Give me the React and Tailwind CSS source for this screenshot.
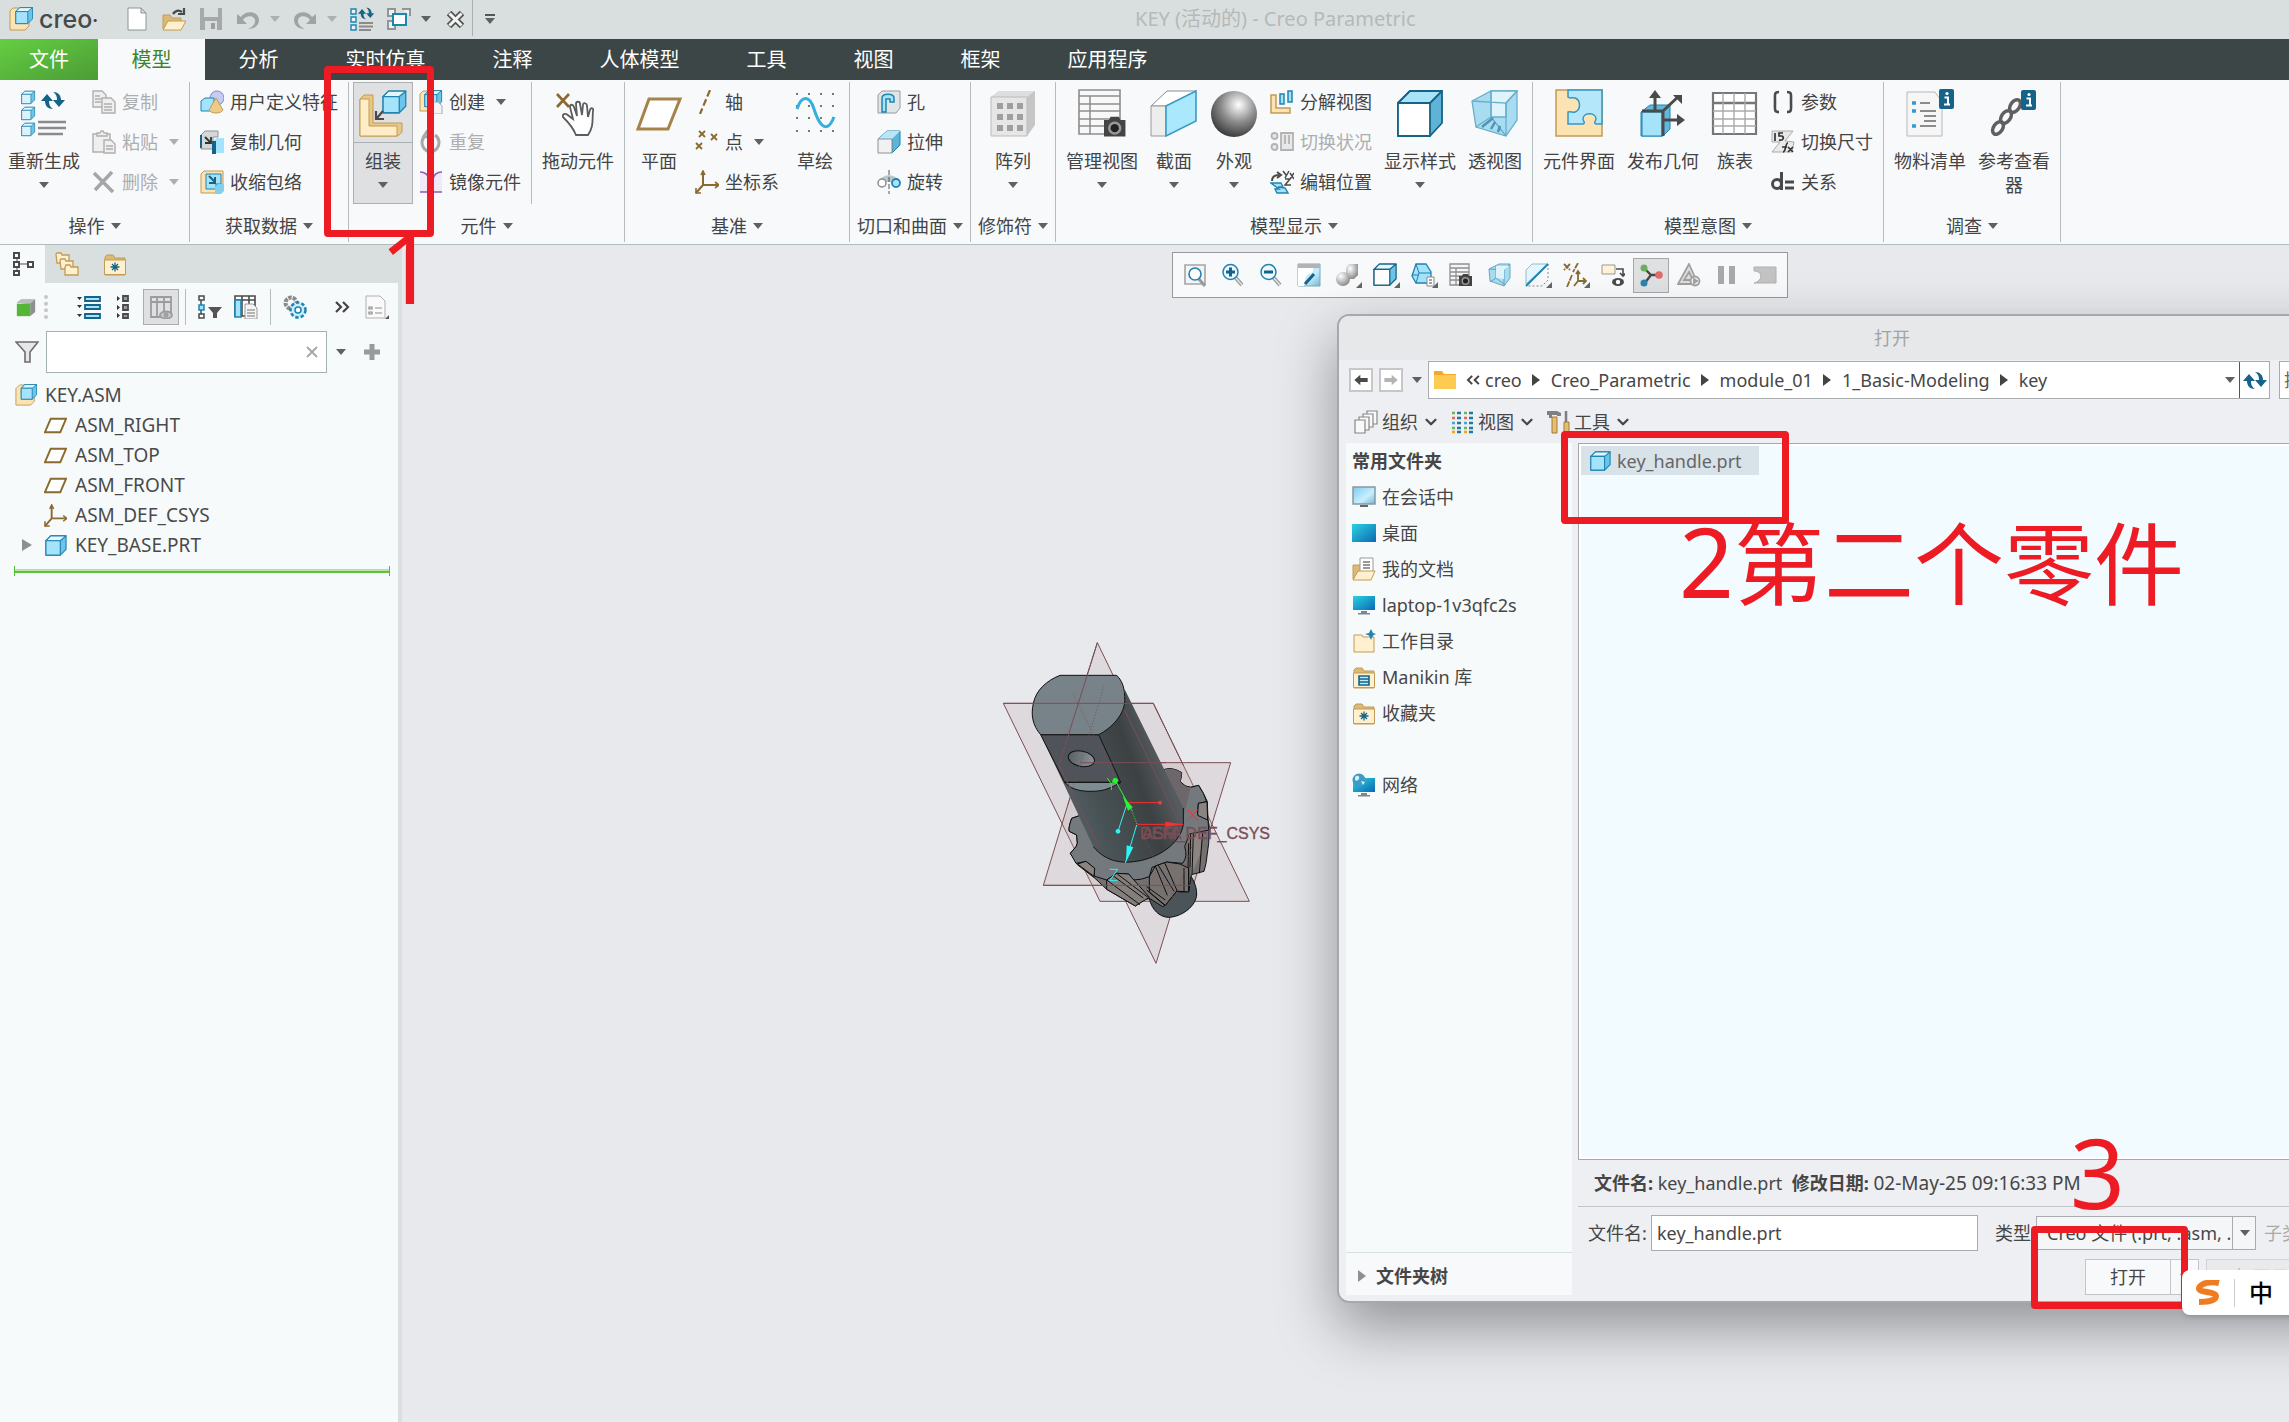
import clsx from 'clsx'
import { FiChevronDown } from 'react-icons/fi'

/* ---------- icons ---------- */

const BLUE = '#1f84b0'
const NAVY = '#156388'
const SKY = '#a5e3fb'
const PALE = '#e4f6fd'
const TAN = '#fbe3b4'
const SAND = '#c29b55'
const BROWN = '#8a6a2f'
const GRAY = '#8b8b8b'
const DARK = '#4a4a4a'

const Camera = ({ x = 0, y = 0 }) => (
  <g transform={`translate(${x} ${y})`}>
    <path d="M0 3h3l1-2h5l1 2h3v10H0z" fill="#444" />
    <circle cx="6.5" cy="8" r="4" fill="#999" />
    <circle cx="6.5" cy="8" r="2.5" fill="#222" />
  </g>
)

const Cube = ({ x = 0, y = 0, s = 1, front = SKY, line = BLUE }) => (
  <g transform={`translate(${x} ${y}) scale(${s})`} stroke={line} strokeWidth="1.2" strokeLinejoin="round">
    <path d="M1 7l5-5h16v14l-6 6H1z" fill="#6cc5e8" />
    <path d="M1 7l5-5h16l-6 5z" fill={PALE} />
    <path d="M1 7h15v15H1z" fill={front} />
  </g>
)

const Folder = ({ children }) => (
  <g>
    <path d="M2 8V5l2-2h6l2 3h10v17H2z" fill="#dcb974" stroke={SAND} />
    <path d="M1.5 8h21v14.500h-21z" fill="#fff0cf" stroke={SAND} />
    {children}
  </g>
)

const Spark = ({ x = 12, y = 15 }) => (
  <path
    d="M0-4.500V4.500M-4.500 0H4.500M-3-3L3 3M3-3L-3 3"
    transform={`translate(${x} ${y})`}
    stroke={NAVY}
    strokeWidth="1.3"
  />
)

const Swap = () => (
  <g fill={NAVY}>
    <path d="M0 13l6-7 6 7H8c0 4 1 6 4 8-5 0-8-3-8-8z" />
    <path d="M24 12l-6 7-6-7h4c0-4-1-6-4-8 5 0 8 3 8 8z" />
  </g>
)

const Magnifier = ({ sign }) => (
  <g>
    <path d="M14 14l7 8" stroke="#9a9a9a" strokeWidth="4" />
    <path d="M14 14l7 8" stroke="#e2e2e2" strokeWidth="1.500" />
    <circle cx="9.500" cy="9" r="7.500" fill="#edf9fe" stroke={BLUE} strokeWidth="1.500" />
    {sign && <path d={sign} stroke={NAVY} strokeWidth="3" />}
  </g>
)

const Info = ({ x, y }) => (
  <g transform={`translate(${x} ${y})`}>
    <rect width="15" height="20" rx="2" fill={NAVY} />
    <path d="M5.500 8.500h3.500v7M5 15.500h6" stroke="#fff" strokeWidth="2" fill="none" />
    <circle cx="8" cy="4.500" r="1.600" fill="#fff" />
  </g>
)

const Monitor = ({ y = 0 }) => (
  <g transform={`translate(0 ${y})`}>
    <path d="M1 3h22v14H1z" fill="url(#screen)" />
    <path d="M9 18h6v2h3v1.500H6V20h3z" fill="#7a8790" />
  </g>
)

const ICONS = {
  logo: (
    <g>
      <path d="M1 4l3-3h8v13h8v5l-4 4H1z" fill={TAN} stroke={SAND} />
      <Cube x={6} y={-1} s={0.8} />
    </g>
  ),
  newFile: <path d="M3 1h13l5 5v17H3zM16 1v5h5" fill="#fff" stroke="#8c9494" />,
  open: (
    <g>
      <path d="M1 22V8h7l2 3h9v11z" fill="#dcb974" stroke={SAND} />
      <path d="M1 23l5-9h18l-5 9z" fill="#fff0cf" stroke={SAND} />
      <path d="M11 7c3-4 6-4 9-2M22 1v6h-6" fill="none" stroke={DARK} strokeWidth="2.200" />
    </g>
  ),
  save: (
    <g>
      <path d="M1 1h22v22H1z" fill="#a5a9a9" />
      <path d="M5 1h14v9H5zM6 14h12v9H6z" fill="#d9dddd" />
      <path d="M12 16h4v6h-4z" fill="#9a9e9e" />
    </g>
  ),
  undo: <path d="M1 7v10h10l-4-4c3-5 12-5 12 1 0 4-3 6-7 8 7 0 11-4 11-9 0-8-12-11-18-3z" fill="#9ea4a4" />,
  redo: <path d="M23 7v10H13l4-4c-3-5-12-5-12 1 0 4 3 6 7 8-7 0-11-4-11-9 0-8 12-11 18-3z" fill="#9ea4a4" />,
  regenSmall: (
    <g>
      <path d="M1 2h5v5H1zM1 10h5v5H1zM1 18h5v5H1z" fill={PALE} stroke={BLUE} strokeWidth="1.400" />
      <path d="M9 16h14M9 19.500h14M9 23h12" stroke={GRAY} strokeWidth="1.800" />
      <g transform="translate(8 -2) scale(.68)"><Swap /></g>
    </g>
  ),
  windows: (
    <g fill="none" strokeWidth="2">
      <path d="M8 9V2H1v7zM1 14h7v8H1zM15 2h8v7" stroke="#909696" fill="#eef1f1" />
      <path d="M6 7h13v11H6z" stroke={BLUE} fill="#fff" />
    </g>
  ),
  closeX: (
    <g>
      <path d="M5 6l13 13M18 6L5 19" stroke="#555" strokeWidth="6.500" />
      <path d="M5.500 6.500l12 12M17.500 6.500l-12 12" stroke="#f4f6f6" strokeWidth="3" />
    </g>
  ),
  copy: (
    <g fill="#efefef" stroke="#b0b0b0" strokeWidth="1.400">
      <path d="M1 1h9l4 4v12H1z" /><path d="M3 6h5M3 9h6M3 12h6" />
      <path d="M10 8h9l4 4v11H10z" /><path d="M12 14h8M12 17h8M12 20h8" />
    </g>
  ),
  paste: (
    <g fill="#efefef" stroke="#b0b0b0" strokeWidth="1.400">
      <path d="M1 4h17v18H1z" /><path d="M5 6V3h3l1-2h2l1 2h3v3z" />
      <path d="M12 10h7l4 4v9H12z" /><path d="M14 16h7M14 19h7" />
    </g>
  ),
  del: <path d="M2 3l19 19M20 2L3 20" stroke="#a6a6a6" strokeWidth="3.500" />,
  udf: (
    <g>
      <circle cx="17" cy="8" r="7" fill="#c5ccf2" stroke="#7d89cf" />
      <path d="M1 11l4-3h9v9l-4 4H1z" fill={SKY} stroke={BLUE} />
      <path d="M16 8l7 12c-2 4-12 4-14 0z" fill="#edcb86" stroke={SAND} />
    </g>
  ),
  copyGeom: (
    <g>
      <path d="M1 5l4-4h13v6h-5v12H1z" fill="#d5d8da" stroke="#8f9498" />
      <path d="M1 5v13" stroke={NAVY} strokeWidth="2" />
      <path d="M5 7l6 6M11 7v6H5" stroke="#333" strokeWidth="1.800" fill="none" />
      <path d="M13 11l4-3h7v15H13z" fill={SKY} /><path d="M12 11h4v13h-4z" fill={NAVY} />
    </g>
  ),
  shrink: (
    <g>
      <path d="M1 4l3-3h19v15h-6v7H1z" fill={TAN} stroke={SAND} />
      <path d="M6 4h15v10h-5v5H6z" fill={SKY} stroke={BLUE} />
      <path d="M9 6l6 6M15 7v6H9" stroke={NAVY} strokeWidth="2" fill="none" />
      <path d="M15 17l3-3h6v7l-3 3h-6z" fill="#82d0ee" />
    </g>
  ),
  create: (
    <g>
      <path d="M1 4l3-3h9v12h8v5l-4 3H1z" fill={TAN} stroke={SAND} />
      <Cube x={5} y={-1} s={0.8} />
      <path d="M13 12h6l4 4v8H13z" fill="#f4f4f4" stroke="#aaa" />
    </g>
  ),
  repeat: <path d="M7 5a8.500 9 0 1 0 9 0M9 0L5 6l7 2" fill="none" stroke="#a8a8a8" strokeWidth="3" />,
  mirror: (
    <g stroke="#8e5bb5" strokeWidth="1.600">
      <path d="M1 2c5 0 9 3 9 8v12H1M23 2c-5 0-9 3-9 8v12h9" fill="#f1e8f8" />
    </g>
  ),
  axis: <path d="M15 0L5 24" stroke={BROWN} strokeWidth="2.200" strokeDasharray="7 3" />,
  point: (
    <path d="M4 1l6 6M10 1L4 7M16 4l6 6M22 4l-6 6M1 13l6 6M7 13l-6 6" stroke={BROWN} strokeWidth="1.800" />
  ),
  csys: (
    <g fill="none" stroke={BROWN} strokeWidth="2">
      <path d="M8 2v13l-7 8M8 15h15" />
      <path d="M6 5l2-4 2 4M20 12l4 3-4 3M1 18v5h5" strokeWidth="1.600" />
    </g>
  ),
  hole: (
    <g>
      <path d="M1 5l4-4h18v17l-4 5H1z" fill="#e2e5e7" stroke="#999" />
      <path d="M5 22V8c0-5 12-5 12 0v4h-4V9H9v13z" fill={SKY} stroke={BLUE} strokeWidth="1.500" />
    </g>
  ),
  extrude: (
    <g>
      <path d="M1 9L10 1h13v14l-8 8V9z" fill="#5db4d8" stroke={BLUE} />
      <path d="M1 9L10 1h13l-8 8z" fill="#b8e6f8" />
      <path d="M1 9h14v14H1z" fill="#f0f1f2" stroke="#909090" />
    </g>
  ),
  revolve: (
    <g fill="none">
      <path d="M4 9c3-5 13-5 16 0l-1 3H5z" fill="#b9c5cb" />
      <circle cx="5" cy="13" r="4" fill="#fff" stroke={GRAY} strokeWidth="1.500" />
      <circle cx="19" cy="13" r="4" fill={SKY} stroke={BLUE} strokeWidth="1.800" />
      <path d="M12 0v24" stroke="#555" strokeDasharray="5 2" />
    </g>
  ),
  explode: (
    <g>
      <path d="M1 5h5v13h14v5H1z" fill={TAN} stroke={SAND} strokeWidth="1.500" />
      <path d="M10 4h4v10h-4zM18 1h4v11h-4z" fill={SKY} stroke={BLUE} strokeWidth="1.500" />
    </g>
  ),
  toggleState: (
    <g fill="#e8e8e8" stroke="#b3b3b3" strokeWidth="1.800">
      <circle cx="4.500" cy="6" r="3" /><circle cx="4.500" cy="17" r="3" />
      <path d="M11 3h12v17H11zM15 5v9M19 5v9" />
    </g>
  ),
  editPos: (
    <g fill="none">
      <path d="M2 11c0-5 3-6 7-6M7 2l4 3-4 3" stroke={DARK} strokeWidth="2" />
      <path d="M13 1l3 4M19 1l-4 7M15 9h5l-5 6h6M20 3l4 6M24 3l-4 6" stroke={DARK} strokeWidth="1.500" />
      <path d="M1 13h10l2 4h-5l7 1 3 5H7l-2-4h4z" fill={SKY} stroke={BLUE} strokeWidth="1.400" />
    </g>
  ),
  param: <path d="M8 2C3 2 4 4 4 12s-1 10 4 10M16 2c5 0 4 2 4 10s1 10-4 10" fill="none" stroke={DARK} strokeWidth="2.600" />,
  dims: (
    <g>
      <path d="M1 1h21L14 11l9 1-2 10H1l8-10H1z" fill="#e9e9e9" stroke="#aaa" />
      <path d="M4 3v8M12 3H8v3h3c2 1 2 5-3 4M12 22c3 0 2-9 5-9M11 17h5M17 17l5 5M22 17l-5 5" fill="none" stroke="#333" strokeWidth="1.700" />
    </g>
  ),
  relation: (
    <g fill="none" stroke={DARK} strokeWidth="3">
      <circle cx="6" cy="14" r="4.500" /><path d="M10.500 2v18M14 12h9M14 18h9" />
    </g>
  ),
  fit: (
    <g>
      <path d="M2 2h20v19H2z" fill="#f2f4f5" stroke="#a5a5a5" strokeWidth="1.600" />
      <path d="M15 15l7 8" stroke="#999" strokeWidth="3" />
      <circle cx="12" cy="11" r="6" fill="#fff" stroke={BLUE} strokeWidth="1.600" />
    </g>
  ),
  zoomIn: <Magnifier sign="M5 9h9M9.500 4.500v9" />,
  zoomOut: <Magnifier sign="M5 9h9" />,
  repaint: (
    <g>
      <path d="M1 1h22v22H1z" fill="url(#screenLight)" stroke="#7caabb" />
      <path d="M1 5h15c2 3-1 5-4 6-4 2-4 7-5 12H1z" fill="#fff" /><path d="M1 1h22v4H1z" fill="#aeb4b7" />
      <path d="M17 11L8 21" stroke={NAVY} strokeWidth="3" />
    </g>
  ),
  shading: (
    <g>
      <path d="M11 5l3-4h9v11l-4 4h-8z" fill="url(#ball)" />
      <circle cx="8" cy="16" r="7" fill="url(#ball)" />
    </g>
  ),
  display: <Cube x={0} y={-1} s={1.05} front="#fff" line={NAVY} />,
  saved: (
    <g>
      <path d="M5 1h10l5 8v11H5L1 13z" fill={SKY} stroke={BLUE} strokeWidth="1.300" />
      <path d="M5 1l3 9-3 10M8 10h12M1 12h7" stroke={BLUE} fill="none" />
      <path d="M16 14h7v9h-7z" fill="#fff" stroke={GRAY} /><path d="M18 17h3M18 20h3" stroke={DARK} />
    </g>
  ),
  viewMgr: (
    <g>
      <path d="M1 1h19v21H1zM1 5h19M1 9h19M1 13h19M1 17h19M7 5v17" fill="#f6f6f6" stroke="#909090" strokeWidth="1.300" />
      <Camera x={10} y={10} />
    </g>
  ),
  persp: (
    <g>
      <path d="M2 6l10-5h11v14l-6 8-14-5z" fill="#a9dcf0" stroke="#62a9c7" />
      <path d="M9 3v12l-6 4M9 15l9 7M23 1l-6 6v15M2 6l15 1" fill="none" stroke="#5fa2c0" />
      <path d="M9 3h13l-5 4v9l-8-1z" fill="#dff3fa" />
    </g>
  ),
  section: (
    <g>
      <path d="M1 7l6-6h16L1 21z" fill={PALE} stroke="#8abed2" />
      <path d="M23 1v16l-6 6H2" stroke={GRAY} strokeDasharray="2 2" fill="none" />
      <path d="M1 23L23 1" stroke={BLUE} strokeWidth="2" />
    </g>
  ),
  datum: (
    <g fill="none" stroke={BROWN} strokeWidth="1.800">
      <path d="M1 1l6 6M7 1L1 7M15 0l-5 9M9 12L4 24" strokeDasharray="6 1" />
      <path d="M15 9v9h8M15 18l-4 5M13 11l2-3 2 3M20 15l3 3-3 3" />
    </g>
  ),
  annot: (
    <g>
      <path d="M1 2h13v9H1z" fill="#fff3d6" stroke="#999" />
      <path d="M15 6h7v7M19 10l3 3 3-3" fill="none" stroke={DARK} strokeWidth="1.600" />
      <ellipse cx="17" cy="19" rx="6" ry="4" fill={DARK} /><circle cx="17" cy="19" r="2.200" fill="#fff" />
    </g>
  ),
  spin: (
    <g>
      <path d="M5 5l7 7 9 0M12 12l-7 9" stroke={DARK} strokeWidth="2.400" fill="none" />
      <circle cx="5" cy="5" r="3.500" fill="#6cae5e" /><circle cx="20" cy="12" r="3.800" fill="#e36a6a" />
      <circle cx="5" cy="20" r="3.500" fill="#2b83ad" />
    </g>
  ),
  simulate: (
    <g fill="#ddd" stroke="#a0a0a0" strokeWidth="1.800">
      <path d="M12 1l9 20H1zM12 9l4 8H7z" /><circle cx="18" cy="18" r="4.500" fill="#eee" /><path d="M17 16l3 2-3 2z" />
    </g>
  ),
  pause: <path d="M3 3h6v18H3zM14 3h6v18h-6z" fill="#a9a9a9" />,
  shell: <path d="M1 4h22v16H1c9-2 9-12 0-12z" fill="#c3c3c3" stroke="#b0b0b0" />,

  modelTree: (
    <g fill="#fff" stroke={DARK} strokeWidth="2">
      <path d="M5 6v12M7 12h9" stroke={GRAY} strokeWidth="1.500" />
      <path d="M2 1h5v5H2zM2 10h5v5H2zM2 19h5v4H2zM16 10h5v5h-5z" />
    </g>
  ),
  folders: (
    <g fill="#fff0cf" stroke={SAND} strokeWidth="1.300">
      <path d="M1 2l1-1h4l1 2h7v8H2z" /><path d="M5 8l1-1h4l1 2h7v8H6z" /><path d="M10 15l1-2h4l1 2h7v8H10z" />
    </g>
  ),
  favFolder: <Folder><Spark /></Folder>,
  greenBox: (
    <g>
      <path d="M1 7l5-4h17v15l-6 5V8z" fill="#8f8f8f" /><path d="M1 7l5-4h17l-6 5z" fill="#bdbdbd" />
      <path d="M1 8h16v15H1z" fill="#54b536" />
    </g>
  ),
  expand: (
    <g>
      <path d="M8 2h15v4H8zM8 10h15v4H8zM8 19h15v4H8z" fill={SKY} stroke={NAVY} strokeWidth="1.800" />
      <path d="M0 2h5L2.500 5zM0 10h5l-2.500 3zM0 19h5l-2.500 3z" fill="#333" />
    </g>
  ),
  collapse: (
    <g>
      <path d="M10 1h5v5h-5zM10 10h5v5h-5zM10 19h5v4h-5z" fill="#999" stroke={DARK} strokeWidth="1.800" />
      <path d="M4 1v5l3-2.500zM4 10v5l3-2.500zM4 18v5l3-2.500z" fill="#333" />
    </g>
  ),
  columns: (
    <g fill="none" stroke="#9c9c9c" strokeWidth="1.800">
      <path d="M2 2h20v20H2zM2 7h20M8 2v20M15 2v14" />
      <ellipse cx="17" cy="20" rx="6" ry="3.500" fill="#c6c6c6" /><circle cx="17" cy="20" r="1.500" />
    </g>
  ),
  treeFilter: (
    <g>
      <path d="M3 4v17" stroke={DARK} strokeWidth="1.500" />
      <path d="M1 1h5v4H1zM1 19h5v4H1z" fill="#fff" stroke={DARK} strokeWidth="1.500" />
      <path d="M1 10h5v5H1z" fill={SKY} stroke={BLUE} strokeWidth="1.500" />
      <path d="M10 12h14l-5 6v5h-4v-5z" fill="#555" />
    </g>
  ),
  colSettings: (
    <g>
      <path d="M1 1h20v20H1zM8 1v20M15 1v8M1 5h20" fill="#fff" stroke={DARK} strokeWidth="1.600" />
      <path d="M1 5h6v17H1z" fill={SKY} stroke={BLUE} strokeWidth="1.600" />
      <path d="M11 9h8l4 4v11H11z" fill="#f4f4f4" stroke="#999" /><path d="M13 15h8M13 18h8M13 21h8" stroke="#777" />
    </g>
  ),
  gears: (
    <g fill="none">
      <circle cx="8" cy="8" r="5.500" stroke="#8c8c8c" strokeWidth="4" strokeDasharray="3.500 1" />
      <circle cx="15" cy="15" r="7.500" stroke={BLUE} strokeWidth="2.500" strokeDasharray="3.500 2" fill="#c9edfb" />
      <circle cx="15" cy="15" r="3" stroke={BLUE} strokeWidth="1.500" fill="#fff" />
    </g>
  ),
  more: <path d="M5 7l5 5-5 5M12 7l5 5-5 5" fill="none" stroke="#444" strokeWidth="2.200" />,
  less: <path d="M11 7l-5 5 5 5M19 7l-5 5 5 5" fill="none" stroke="#444" strokeWidth="2.400" />,
  report: (
    <g>
      <path d="M1 1h14l5 5v17H1z" fill="#fafafa" stroke="#b0b0b0" />
      <path d="M4 12h3v2H4zM4 17h3v2H4zM10 13h7M10 18h7" stroke={GRAY} strokeWidth="1.200" fill="none" />
      <path d="M24 20v4h-4z" fill="#555" />
    </g>
  ),
  funnel: <path d="M1 2h22l-8 10v10h-5V12z" fill="#e7e7e7" stroke="#6d6d6d" strokeWidth="1.600" />,
  plus: <path d="M9.500 4h5v5.500H20v5h-5.500V20h-5v-5.500H4v-5h5.500z" fill="#9a9a9a" />,
  asm: (
    <g>
      <path d="M1 5l4-4h8v13h8v5l-4 4H1z" fill={TAN} stroke={SAND} />
      <Cube x={6} y={-1} s={0.8} />
    </g>
  ),
  plane: <path d="M7 5h16l-6 14H1z" fill="#fff" stroke={BROWN} strokeWidth="2" />,
  part: <Cube x={1} y={0} />,

  back: <path d="M2 12l9-8v5h11v6H11v5z" fill={DARK} />,
  forward: <path d="M22 12l-9-8v5H2v6h11v5z" fill="#b4b4b4" />,
  folder: (
    <g>
      <path d="M1 3h8l2 3h12v4H1z" fill="#f0a928" /><path d="M1 7h22v14H1z" fill="#fdcb52" />
    </g>
  ),
  refresh: <Swap />,
  organize: (
    <g fill="#f9f9f9" stroke="#888" strokeWidth="1.200">
      <path d="M13 1h10v13H13z" /><path d="M9 4h10v13H9z" /><path d="M5 7h10v13H5z" /><path d="M1 10h10v13H1z" />
    </g>
  ),
  views: (
    <g strokeWidth="2.600">
      <path d="M7 3h4M7 8h4M7 13h4M7 18h4M7 22h4M19 3h4M19 8h4M19 13h4M19 18h4M19 22h4" stroke="#1f7a9e" />
      <path d="M2 3h3M14 3h3M2 18h3M14 18h3" stroke="#6fb35e" /><path d="M2 8h3M14 8h3" stroke="#df6b62" />
      <path d="M2 13h3M14 13h3" stroke="#3da7e8" /><path d="M2 22h3M14 22h3" stroke="#efa720" />
    </g>
  ),
  tools: (
    <g>
      <path d="M1 1h10l4 2v3h-4V5H6v3H3V5H1z" fill="#7d7f86" />
      <path d="M6 7h5v16H6z" fill="#e6bd74" stroke="#a37a35" /><path d="M20 1v11" stroke="#7d7f86" strokeWidth="2.500" />
      <path d="M18 12h5v11h-5z" fill="#e6bd74" stroke="#a37a35" />
    </g>
  ),
  session: (
    <g>
      <path d="M1 2h22v17H1z" fill="url(#screenLight)" stroke="#8b979d" strokeWidth="1.500" />
      <path d="M8 20h8v2H8z" fill="#666" />
    </g>
  ),
  desktop: <path d="M0 3h24v18H0z" fill="url(#screen)" />,
  docs: (
    <g>
      <path d="M1 22V8h7l2 2v12z" fill="#dcb974" stroke={SAND} />
      <path d="M8 1h13v16H8z" fill="#fff" stroke="#999" /><path d="M11 5h7M11 8h7M11 11h7" stroke="#777" strokeWidth="1.400" />
      <path d="M1 23l5-9h17l-4 9z" fill="#fff0cf" stroke={SAND} />
    </g>
  ),
  computer: <Monitor />,
  workDir: (
    <g>
      <path d="M2 8V6h8l1 2h11v15H2z" fill="#fff0cf" stroke={SAND} />
      <path d="M19 0l2 4 3 1-3 1.500L19 11l-2-4.500L13 5l4-1z" fill={BLUE} />
    </g>
  ),
  manikin: (
    <Folder>
      <path d="M7 11h10v9H7zM7 14h10M7 17h10" fill="#bfeaff" stroke={NAVY} strokeWidth="1.600" />
    </Folder>
  ),
  network: (
    <g>
      <Monitor y={2} />
      <circle cx="7" cy="7" r="6.500" fill="#3d9cc6" /><path d="M3 4c3-3 5 0 4 2s-3 2-4 1zM9 8l4 1-2 3z" fill="#d3effa" />
    </g>
  ),
}

const BIG_ICONS = {
  regen: (
    <g>
      <Cube x={1} y={1} s={0.62} front="#d9f3fc" /><Cube x={1} y={17} s={0.62} front="#d9f3fc" />
      <Cube x={1} y={33} s={0.62} front="#d9f3fc" />
      <path d="M18 33h28M18 39h28M18 45h25" stroke={GRAY} strokeWidth="2.600" />
      <g transform="translate(21 -1)"><Swap /></g>
    </g>
  ),
  assemble: (
    <g>
      <path d="M1 10l4-4h9v28h26l3 0v9l-4 4H1z" fill="#e9c887" stroke={SAND} />
      <path d="M1 10h9v27h28v10H1z" fill="#ffedc8" stroke={SAND} />
      <Cube x={23} y={0} s={1.08} />
      <path d="M24 22l-6 7M17 22v8h8" stroke={DARK} strokeWidth="2.200" fill="none" />
    </g>
  ),
  drag: (
    <g>
      <path d="M3 5l12 13M15 5L3 18" stroke={BROWN} strokeWidth="2.600" />
      <path
        d="M22 46c-3-8-9-14-13-18-1-4 3-4 6-1l4 3-3-12c0-3 3-3 4 0l3 9-1-12c0-3 4-3 4 0l2 11 1-10c0-3 4-2 4 1l1 11 2-7c1-3 4-2 3 1-1 10 1 15-5 24z"
        fill="#fff"
        stroke="#5d5d5d"
        strokeWidth="1.800"
      />
    </g>
  ),
  plane: <path d="M14 10h31l-12 30H3z" fill="#fff" stroke="#a5834a" strokeWidth="3" />,
  sketch: (
    <g>
      {[5, 17, 29, 42].map((y) => (
        <path key={y} d={`M5 ${y}h38`} stroke="#777" strokeWidth="2" strokeDasharray="2 10" />
      ))}
      <path d="M6 20c5-15 13-13 17 0s12 28 20 8" fill="none" stroke="#35aee0" strokeWidth="3" />
    </g>
  ),
  pattern: (
    <g>
      <path d="M2 8l8-6h36v34l-8 11H2z" fill="#c6c6c6" /><path d="M2 8l8-6h36l-8 6z" fill="#dedede" />
      <path d="M2 8h36v39H2z" fill="#e6e6e6" stroke="#bbb" />
      {[14, 25, 36].map((y) => (
        <path key={y} d={`M8 ${y + 3}h6M18 ${y + 3}h6M28 ${y + 3}h6`} stroke="#9f9f9f" strokeWidth="6" />
      ))}
    </g>
  ),
  viewMgr: (
    <g>
      <path d="M1 1h41v44H1z" fill="#f8f8f8" stroke="#8d8d8d" strokeWidth="1.600" />
      <path d="M1 7h41M1 15h41M1 22h41M1 30h41M1 37h41M12 7v38" stroke="#8d8d8d" strokeWidth="1.500" />
      <g transform="translate(26 26) scale(1.650)"><Camera /></g>
    </g>
  ),
  section: (
    <g>
      <path d="M1 17L17 2h29L16 17z" fill="#fff" stroke={GRAY} />
      <path d="M1 17h15v30H1z" fill="#ededed" stroke="#999" />
      <path d="M16 17L46 2v30L16 47z" fill="#a9e8fd" stroke="#3a9cc5" strokeWidth="1.600" />
    </g>
  ),
  appearance: <circle cx="24" cy="25" r="23" fill="url(#ballDark)" />,
  display: (
    <g stroke={NAVY} strokeWidth="1.800" strokeLinejoin="round">
      <path d="M2 14L14 2h32v32L34 47H2z" fill="#5fb3d6" />
      <path d="M2 14L14 2h32L34 14z" fill="#a8e3f8" /><path d="M2 14h32v33H2z" fill="#fff" />
    </g>
  ),
  persp: (
    <g stroke="#68aecb" strokeWidth="1.300">
      <path d="M1 12L20 2h26v29L35 47 5 38z" fill="#a8dcf0" />
      <path d="M20 2h26L35 14v14H20z" fill="#dff3fa" /><path d="M1 12l34 2v33M35 14L46 2M20 2v26L5 38M20 28l15 19" fill="none" />
      <path d="M11 38l11-9M20 40l4-7M27 43l2-6" stroke="#4f94b3" strokeWidth="2.500" />
    </g>
  ),
  iface: (
    <g strokeWidth="1.500">
      <path d="M1 1h46v46H1z" fill={TAN} stroke={SAND} />
      <path
        d="M13 1h34v34h-6c-3-1 0-3 0-5 0-7-13-7-13 0 0 2 3 4 0 5H13V23c3-1 5 1 7 0 6-2 6-12 0-14-3-1-5 1-7-1z"
        fill="#b5e7fa"
        stroke="#3498c4"
      />
    </g>
  ),
  publish: (
    <g>
      <path d="M2 23l9-7h20v24l-7 7H2z" fill="#5fb9dd" stroke={BLUE} />
      <path d="M3 23h20v24H3z" fill="#a5e3fb" stroke={BLUE} />
      <path d="M3 22h21v25M24 22L40 7M16 22V5M24 31h18" stroke={DARK} strokeWidth="3" fill="none" />
      <path d="M10 9l6-8 6 8zM34 6h9v9zM38 25l8 6-8 6z" fill={DARK} />
    </g>
  ),
  family: (
    <g fill="#fff" stroke="#777">
      <path d="M2 4h43v41H2z" strokeWidth="2.200" /><path d="M2 14h43" strokeWidth="2.600" />
      <path d="M2 22h43M2 30h43M2 37h43M12 4v41M23 4v41M34 4v41" stroke="#aaa" strokeWidth="1.400" />
    </g>
  ),
  bom: (
    <g>
      <path d="M1 3h28l7 10v34H1z" fill="#f6f6f6" stroke="#b8b8b8" />
      <path d="M6 14h4M6 22h4M6 37h4" stroke="#2f9ad6" strokeWidth="3.500" />
      <path d="M14 14h10M14 22h16M18 27h12M18 32h12M14 37h16" stroke={GRAY} strokeWidth="1.800" />
      <Info x={33} y={0} />
    </g>
  ),
  refViewer: (
    <g>
      <g fill="none" stroke="#5f5f5f" strokeWidth="3.500">
        <ellipse cx="8" cy="39" rx="4.500" ry="7" transform="rotate(35 8 39)" />
        <ellipse cx="16" cy="28" rx="4.500" ry="7" transform="rotate(35 16 28)" />
        <ellipse cx="25" cy="17" rx="4.500" ry="7" transform="rotate(35 25 17)" />
      </g>
      <Info x={31} y={1} />
    </g>
  ),
}

function Icon({ name, className = 'size-6' }) {
  return (
    <svg viewBox="0 0 24 24" className={clsx('shrink-0', className)} aria-hidden="true">
      {ICONS[name]}
    </svg>
  )
}

const BigIcon = ({ name }) => (
  <svg viewBox="0 0 48 48" className="size-12 shrink-0" aria-hidden="true">{BIG_ICONS[name]}</svg>
)

const Caret = ({ light }) => (
  <svg viewBox="0 0 10 6" className="h-1.5 w-2.5 shrink-0" aria-hidden="true">
    <path d="M0 0h10L5 6z" fill={light ? '#adb0b0' : '#606060'} />
  </svg>
)

const SharedDefs = () => (
  <svg className="absolute size-0" aria-hidden="true">
    <defs>
      <linearGradient id="screen" x1="0" y1="0" x2="1" y2="1">
        <stop offset="0" stopColor="#2bd3e0" /><stop offset="1" stopColor="#0b68b4" />
      </linearGradient>
      <linearGradient id="screenLight" x1="0" y1="0" x2="1" y2="1">
        <stop offset="0" stopColor="#7cccf3" /><stop offset=".6" stopColor="#c9eefc" /><stop offset="1" stopColor="#6fb6d3" />
      </linearGradient>
      <radialGradient id="ball" cx=".35" cy=".3" r=".8">
        <stop offset="0" stopColor="#fff" /><stop offset="1" stopColor="#808080" />
      </radialGradient>
      <radialGradient id="ballDark" cx=".6" cy=".3" r=".75">
        <stop offset="0" stopColor="#fff" /><stop offset=".5" stopColor="#8d8d8d" /><stop offset="1" stopColor="#333" />
      </radialGradient>
    </defs>
  </svg>
)

/* ---------- ribbon ---------- */

const TABS = ['分析', '实时仿真', '注释', '人体模型', '工具', '视图', '框架', '应用程序']

function BigButton({ icon, label, caret, pressed }) {
  return (
    <button
      className={clsx(
        'flex min-w-15 max-w-21 flex-col items-center self-stretch border',
        pressed ? 'border-[#adb0b2] bg-[#dfe0e2]' : 'border-transparent'
      )}
    >
      <span className={clsx('flex h-15 items-center self-stretch justify-center border-b', pressed ? 'border-[#adb0b2]' : 'border-transparent')}>
        <BigIcon name={icon} />
      </span>
      <span className="px-[5px] pt-1.5 leading-6">{label}</span>
      {caret && <span className="flex h-6 items-center"><Caret /></span>}
    </button>
  )
}

function SmallButton({ icon, label, caret, disabled }) {
  return (
    <button disabled={disabled} className={clsx('flex h-10 items-center px-1.5', disabled && 'text-[#acaeb0]')}>
      <Icon name={icon} />
      <span className="ml-1.5">{label}</span>
      {caret && <span className="ml-[11px]"><Caret light={disabled} /></span>}
    </button>
  )
}

const Stack = ({ items }) => (
  <div className="flex flex-col">
    {items.map((item) => <SmallButton key={item.label} {...item} />)}
  </div>
)

function Group({ title, className = 'px-1', children }) {
  return (
    <section className="my-0.5 flex shrink-0 flex-col border-r border-[#b4bcbe]">
      <div className={clsx('flex h-[122px] justify-center', className)}>{children}</div>
      <button className="mx-auto flex h-9 items-center gap-1.5 px-[7px] pt-2">
        {title}
        <Caret />
      </button>
    </section>
  )
}

function Ribbon() {
  return (
    <div className="flex h-[165px] shrink-0 overflow-hidden border-b border-[#aebcbe] bg-[#f8f9fb]">
      <Group title="操作" className="pr-1 pl-0.5">
        <BigButton icon="regen" label="重新生成" caret />
        <Stack
          items={[
            { icon: 'copy', label: '复制', disabled: true },
            { icon: 'paste', label: '粘贴', caret: true, disabled: true },
            { icon: 'del', label: '删除', caret: true, disabled: true },
          ]}
        />
      </Group>
      <Group title="获取数据">
        <Stack
          items={[
            { icon: 'udf', label: '用户定义特征' },
            { icon: 'copyGeom', label: '复制几何' },
            { icon: 'shrink', label: '收缩包络' },
          ]}
        />
      </Group>
      <Group title="元件">
        <BigButton icon="assemble" label="组装" caret pressed />
        <Stack
          items={[
            { icon: 'create', label: '创建', caret: true },
            { icon: 'repeat', label: '重复', disabled: true },
            { icon: 'mirror', label: '镜像元件' },
          ]}
        />
        <div className="mx-1 w-px bg-[#b4bcbe]" />
        <BigButton icon="drag" label="拖动元件" />
      </Group>
      <Group title="基准">
        <BigButton icon="plane" label="平面" />
        <Stack
          items={[
            { icon: 'axis', label: '轴' },
            { icon: 'point', label: '点', caret: true },
            { icon: 'csys', label: '坐标系' },
          ]}
        />
        <BigButton icon="sketch" label="草绘" />
      </Group>
      <Group title="切口和曲面">
        <Stack
          items={[
            { icon: 'hole', label: '孔' },
            { icon: 'extrude', label: '拉伸' },
            { icon: 'revolve', label: '旋转' },
          ]}
        />
      </Group>
      <Group title="修饰符">
        <BigButton icon="pattern" label="阵列" caret />
      </Group>
      <Group title="模型显示">
        <BigButton icon="viewMgr" label="管理视图" caret />
        <BigButton icon="section" label="截面" caret />
        <BigButton icon="appearance" label="外观" caret />
        <Stack
          items={[
            { icon: 'explode', label: '分解视图' },
            { icon: 'toggleState', label: '切换状况', disabled: true },
            { icon: 'editPos', label: '编辑位置' },
          ]}
        />
        <BigButton icon="display" label="显示样式" caret />
        <BigButton icon="persp" label="透视图" />
      </Group>
      <Group title="模型意图">
        <BigButton icon="iface" label="元件界面" />
        <BigButton icon="publish" label="发布几何" />
        <BigButton icon="family" label="族表" />
        <Stack
          items={[
            { icon: 'param', label: '参数' },
            { icon: 'dims', label: '切换尺寸' },
            { icon: 'relation', label: '关系' },
          ]}
        />
      </Group>
      <Group title="调查">
        <BigButton icon="bom" label="物料清单" />
        <BigButton icon="refViewer" label="参考查看器" />
      </Group>
    </div>
  )
}

function TitleBar() {
  return (
    <header className="flex h-[39px] shrink-0 items-center bg-[#d9dfde] pb-0.5">
      <Icon name="logo" className="ml-[9px] size-6" />
      <span className="ml-1.5 w-[86px] font-['Inter',sans-serif] text-[25px] leading-8 font-medium text-[#454b4b]">
        creo<sup className="text-[10px]">•</sup>
      </span>
      <div className="flex items-center gap-[13px]">
        <button aria-label="新建"><Icon name="newFile" /></button>
        <button aria-label="打开"><Icon name="open" /></button>
        <button aria-label="保存"><Icon name="save" /></button>
        <button aria-label="撤消" className="flex items-center gap-2.5"><Icon name="undo" /><Caret light /></button>
        <button aria-label="重做" className="flex items-center gap-2.5"><Icon name="redo" /><Caret light /></button>
        <button aria-label="重新生成"><Icon name="regenSmall" /></button>
        <button aria-label="窗口" className="flex items-center gap-2.5"><Icon name="windows" /><Caret /></button>
        <button aria-label="关闭"><Icon name="closeX" /></button>
      </div>
      <div className="ml-1 h-9 w-px self-start bg-[#a9b0b0]" />
      <button aria-label="自定义" className="ml-3 flex w-2.5 flex-col items-center gap-0.5">
        <span className="h-0.5 w-2.5 bg-[#555]" />
        <Caret />
      </button>
      <h1 className="ml-[640px] whitespace-nowrap text-xl text-[#b4b9b9]">KEY (活动的) - Creo Parametric</h1>
    </header>
  )
}

function TabBar() {
  return (
    <nav className="flex h-[41px] shrink-0 bg-[#3c4646] text-xl text-white">
      <button className="w-[98px] bg-linear-to-br from-[#65cf43] to-[#4b9c35]">文件</button>
      <button className="w-[107px] bg-[#f8f9fb] text-[#3d8428]">模型</button>
      {TABS.map((tab) => (
        <button key={tab} className={tab.length > 2 ? 'w-[147px]' : 'w-[107px]'}>{tab}</button>
      ))}
    </nav>
  )
}

/* ---------- model tree ---------- */

const TREE = [
  ['plane', 'ASM_RIGHT'],
  ['plane', 'ASM_TOP'],
  ['plane', 'ASM_FRONT'],
  ['csys', 'ASM_DEF_CSYS'],
  ['part', 'KEY_BASE.PRT'],
]

function ModelTree() {
  return (
    <aside className="flex w-[402px] shrink-0 flex-col border-r-4 border-[#d9dfde] bg-[#f7fafb]">
      <div className="flex h-[38px] items-center bg-[#d9dfde]">
        <button aria-label="模型树" className="flex h-full w-[45px] items-center bg-[#f7fafb] pl-3"><Icon name="modelTree" /></button>
        <button aria-label="文件夹浏览器" className="ml-2.5"><Icon name="folders" /></button>
        <button aria-label="收藏夹" className="ml-6"><Icon name="favFolder" /></button>
      </div>

      <div className="mt-1.5 flex h-9 items-center">
        <button aria-label="显示" className="ml-4"><Icon name="greenBox" className="size-5" /></button>
        <div className="ml-2 h-6 border-l-4 border-dotted border-[#c6c6c6]" />
        <button aria-label="全部展开" className="ml-[29px]"><Icon name="expand" /></button>
        <button aria-label="全部折叠" className="ml-3"><Icon name="collapse" /></button>
        <button aria-label="列显示" className="ml-1.5 flex h-9 w-9 items-center justify-center border border-[#acacac] bg-[#dfe0e2]"><Icon name="columns" /></button>
        <div className="ml-1.5 h-9 w-px bg-[#b4bcbe]" />
        <button aria-label="树过滤器" className="ml-3"><Icon name="treeFilter" /></button>
        <button aria-label="树列" className="ml-3"><Icon name="colSettings" /></button>
        <div className="ml-3 h-9 w-px bg-[#b4bcbe]" />
        <button aria-label="设置" className="ml-3"><Icon name="gears" /></button>
        <button aria-label="更多" className="ml-6"><Icon name="more" /></button>
        <button aria-label="报告" className="ml-2.5"><Icon name="report" /></button>
      </div>

      <div className="mt-1.5 flex h-[42px] items-center">
        <Icon name="funnel" className="ml-[15px] size-6" />
        <div className="ml-[7px] flex h-full w-[281px] items-center border border-[#a3b1b1] bg-white pr-2">
          <input aria-label="搜索模型树" className="h-full min-w-0 flex-1 px-2 outline-none" />
          <button aria-label="清除">
            <svg viewBox="0 0 12 12" className="size-3"><path d="M1 1l10 10M11 1L1 11" stroke="#a5a5a5" strokeWidth="1.800" /></svg>
          </button>
        </div>
        <button aria-label="搜索选项" className="ml-[9px]"><Caret /></button>
        <button aria-label="添加" className="ml-3.5"><Icon name="plus" /></button>
      </div>

      <ul className="mt-[7px] text-[19px] leading-[30px] text-[#4a4a4a]">
        <li className="flex items-center gap-2 pl-[15px]"><Icon name="asm" className="size-[22px]" />KEY.ASM</li>
        {TREE.map(([icon, label]) => (
          <li key={label} className="flex items-center pl-[22px]">
            <span className="w-[22px]">
              {icon === 'part' && (
                <svg viewBox="0 0 10 12" className="h-3 w-2.5"><path d="M0 0l10 6-10 6z" fill="#8f8f8f" /></svg>
              )}
            </span>
            <Icon name={icon} className="mr-2 size-[23px]" />
            {label}
          </li>
        ))}
      </ul>
      <div className="mr-2 ml-3.5 mt-1.5 flex h-2.5 items-center border-x border-[#54bd37]">
        <div className="h-1 w-full border-b-2 border-[#5cc43c] bg-[#b5e2a8]" />
      </div>
    </aside>
  )
}

/* ---------- graphics area ---------- */

const VIEW_TOOLS = [
  ['fit', '重新调整'],
  ['zoomIn', '放大'],
  ['zoomOut', '缩小'],
  ['repaint', '重画'],
  ['shading', '渲染选项', true],
  ['display', '显示样式', true],
  ['saved', '已保存方向', true],
  ['viewMgr', '视图管理器'],
  ['persp', '透视图'],
  ['section', '截面', true],
  ['datum', '基准显示过滤器', true],
  ['annot', '注释显示'],
  ['spin', '旋转中心'],
  ['simulate', '仿真'],
  ['pause', '暂停'],
  ['shell', '几何'],
]

function ViewToolbar() {
  return (
    <div className="absolute top-[7px] left-[770px] flex h-[46px] items-center gap-0.5 border border-[#999] bg-[#f8f9fb] px-1">
      {VIEW_TOOLS.map(([icon, label, menu]) => (
        <button
          key={icon}
          aria-label={label}
          className={clsx(
            'relative flex h-[35px] w-9 items-center justify-center border',
            icon === 'spin' ? 'border-[#a5a8aa] bg-[#dfe0e2]' : 'border-transparent'
          )}
        >
          <Icon name={icon} />
          {menu && (
            <svg viewBox="0 0 6 6" className="absolute right-0.5 bottom-1 size-1.5"><path d="M6 0v6H0z" fill="#666" /></svg>
          )}
        </button>
      ))}
    </div>
  )
}

function KeyModel() {
  return (
    <svg viewBox="0 0 960 1050" className="absolute top-[385px] left-[578px] h-[350px] w-80" aria-label="KEY 装配模型">
      <defs>
        <linearGradient id="shaft" x1=".1" y1=".6" x2=".8" y2=".3">
          <stop offset="0" stopColor="#566268" /><stop offset=".35" stopColor="#475154" />
          <stop offset=".75" stopColor="#3c4143" /><stop offset="1" stopColor="#555b5e" />
        </linearGradient>
        <linearGradient id="hole" x1="0" x2="1">
          <stop offset="0" stopColor="#5a5f63" /><stop offset="1" stopColor="#8b9499" />
        </linearGradient>
      </defs>

      {/* datum planes */}
      <g fill="#b49a9c" fillOpacity=".2" stroke="#7c4d55" strokeWidth="3">
        <path d="M70 220h450l288 594H360z" />
        <path d="M302 398h450L640 766H190z" />
        <path d="M352 38L237 405l291 595 112-366z" />
      </g>

      {/* toothed disc */}
      <g stroke="#0c0f10" strokeWidth="3" strokeLinejoin="round">
        <path d="M508 806c8 34 30 54 56 56 40 0 86-34 86-70 0-20-8-40-18-54z" fill="#4b5459" />
        <path
          d="M555 418Q580 412 605 428L601 455Q615 472 632 472L656 466L670 490L682 515L684 570L688 590L686 640L678 700L672 724L634 734L626 785L600 786L590 783L556 826L548 830L510 806L496 808L466 828L380 778L345 745L292 704L285 690L271 670L288 650L292 640L290 615L268 604Q264 596 275 565L295 558L560 520z"
          fill="#74706f"
        />
        <path
          d="M555 418Q580 412 605 428L601 455Q615 472 632 472L656 466L670 490L680 515L655 520L653 550L684 570L686 600L628 612L614 650Q624 680 608 700L560 696L516 712L508 740Q484 750 460 750L446 732L410 730L380 750L342 738L344 715L318 694L288 700L271 670L288 650L292 640L290 615L268 604Q264 596 275 565L295 558L400 500z"
          fill="#74797d"
        />
        <path d="M655 520l26-5 2 55-30-14z" fill="#8a837f" />
        <path d="M555 418Q580 412 605 428L601 455Q615 472 632 472L600 600z" fill="#6d666b" stroke="none" />
        <path d="M628 612l40-4-6 60-28 66z" fill="#8b8480" stroke="none" />
        <path d="M292 702l26-8 26 21-2 24z" fill="#8a837f" />
        <path d="M410 730l36 2 62 70-42 26-86-50v-28z" fill="#857f7c" />
        <path d="M508 740l18-32 34-12 40 6 26 12v72l-36-3-34 43-48-40z" fill="#77726f" />
        <path
          d="M380 750l100 74M400 738l90 66M412 732l92 70M500 780l54 46M500 770l56 40M526 708l36 88M534 704l48 80M554 698l38 86M612 714v72M626 712v72M626 640l-2 72M640 612l-4 120M632 612l-2 100M668 608l-10 122"
          fill="none"
        />
      </g>

      {/* shaft */}
      <path d="M182 314L340 650c40 48 90 52 140 42 70-14 124-60 130-110v-48L434 178V212L356 314z" fill="url(#shaft)" />
      <path d="M182 314h174l66 143H254z" fill="#50545a" />
      <path d="M254 457h168c-40 24-60 27-92 27-36 0-62-10-76-27z" fill="#7e8b91" stroke="#111" strokeWidth="3" />
      <path d="M182 314h174l66 143H254z" fill="none" stroke="#111" strokeWidth="3" />
      <path d="M340 650c40 48 90 52 140 42 70-14 124-60 130-110v-48" fill="none" stroke="#111" strokeWidth="3" />
      <path d="M240 136h170c18 18 25 40 24 76 0 40-38 82-78 102H182c-24-28-30-58-22-94 8-40 40-68 80-84z" fill="#788289" stroke="#111" strokeWidth="3" />
      <ellipse cx="304" cy="386" rx="40" ry="23" transform="rotate(12 304 386)" fill="url(#hole)" stroke="#111" strokeWidth="3" />

      {/* plane edges seen through the solid */}
      <g fill="none" stroke="#7c4d55" strokeWidth="3">
        <path d="M70 220h450l90 186M302 398h256M352 38L237 405l120 246M434 240l160 330M190 766h450" />
        <path d="M280 192l320 650M372 168L302 398l-40 130M640 634L584 814" strokeDasharray="3 6" />
      </g>

      <g fill="none" strokeWidth="3">
        <path d="M442 518h98M472 583h138" stroke="#ff2d2d" />
        <path d="M442 518l-28 86M470 585l-34 114" stroke="#2bf5f7" />
        <path d="M406 452l50 90" stroke="#2af332" /><path d="M456 542l15 41" stroke="#2af332" strokeDasharray="3 5" />
        <path d="M622 538l32 34M654 538l-32 34" stroke="#ff2d2d" /><path d="M382 444l12 18 10-18M394 462v18" stroke="#2af332" />
        <path d="M389 718h24l-24 34h24" stroke="#2bf5f7" />
      </g>
      <circle cx="540" cy="518" r="6" fill="#f23a3a" /><circle cx="414" cy="604" r="7" fill="#2bf5f7" />
      <circle cx="406" cy="452" r="8" fill="#2af332" />
      <path d="M556 575l54 8-54 8z" fill="#ff2d2d" /><path d="M440 646l20 6-22 44z" fill="#2bf5f7" />
      <path d="M428 498l30 34-14 10z" fill="#2af332" />

      <g fill="#7c4d55" stroke="#7c4d55" strokeWidth="1" fontFamily="Liberation Sans, sans-serif" fontSize="48">
        <text x="480" y="628">DEFA</text>
        <text x="486" y="628">ASM_DEF_CSYS</text>
      </g>
    </svg>
  )
}

/* ---------- open dialog ---------- */

const PLACES = [
  ['session', '在会话中'],
  ['desktop', '桌面'],
  ['docs', '我的文档'],
  ['computer', 'laptop-1v3qfc2s'],
  ['workDir', '工作目录'],
  ['manikin', 'Manikin 库'],
  ['favFolder', '收藏夹'],
]

const CRUMBS = ['creo', 'Creo_Parametric', 'module_01', '1_Basic-Modeling', 'key']

const MENUS = [
  ['organize', '组织'],
  ['views', '视图'],
  ['tools', '工具'],
]

const RightArrow = ({ color = '#444' }) => (
  <svg viewBox="0 0 8 12" className="h-3 w-2 shrink-0" aria-hidden="true"><path d="M0 0l8 6-8 6z" fill={color} /></svg>
)

function OpenDialog() {
  return (
    <div
      role="dialog"
      aria-label="打开"
      className="absolute top-[69px] left-[935px] flex h-[989px] w-[1110px] flex-col overflow-hidden rounded-xl border-2 border-[#a8a8aa] bg-[#eeeff2] text-[#464646] shadow-[0_24px_60px_rgba(0,0,0,0.38)]"
    >
      <h2 className="flex h-11 shrink-0 items-center justify-center bg-[#e6e8ea] text-[#a3a3a3]">打开</h2>

      <div className="flex h-10 shrink-0 items-center">
        <button aria-label="后退" className="ml-2.5 flex size-6 items-center justify-center border-2 border-[#c5c7c9] bg-white"><Icon name="back" className="size-4" /></button>
        <button aria-label="前进" className="ml-1.5 flex size-6 items-center justify-center border-2 border-[#c5c7c9] bg-white"><Icon name="forward" className="size-4" /></button>
        <button aria-label="历史" className="ml-[9px]"><Caret /></button>
        <div className="ml-1.5 flex h-[38px] w-[842px] items-center border border-[#a8acae] bg-white">
          <Icon name="folder" className="ml-1 size-6" />
          <Icon name="less" className="ml-1.5 size-5" />
          <ol className="ml-0.5 flex flex-1 items-center">
            {CRUMBS.map((crumb, i) => (
              <li key={crumb} className="flex items-center">
                {i > 0 && <span className="mr-[11px] ml-2.5"><RightArrow /></span>}
                <a href="#crumb">{crumb}</a>
              </li>
            ))}
          </ol>
          <button aria-label="最近位置" className="mr-1"><Caret /></button>
          <button aria-label="刷新" className="flex h-full w-[30px] items-center justify-center border-l border-[#555]"><Icon name="refresh" /></button>
        </div>
        <input aria-label="搜索" placeholder="搜索..." className="ml-[9px] h-[38px] w-40 border border-[#a8acae] bg-white px-1 placeholder:text-[#666]" />
      </div>

      <div className="flex h-[43px] shrink-0 items-center gap-2.5 pl-[15px]">
        {MENUS.map(([icon, label]) => (
          <button key={icon} className="flex items-center gap-1">
            <Icon name={icon} />
            {label}
            <FiChevronDown size={18} strokeWidth={3} />
          </button>
        ))}
      </div>

      <div className="flex min-h-0 flex-1">
        <nav className="mb-1.5 ml-[7px] flex w-[226px] flex-col bg-[#f7fafb]">
          <h3 className="px-1.5 leading-9 font-bold">常用文件夹</h3>
          <ul className="flex-1 leading-9">
            {PLACES.map(([icon, label]) => (
              <li key={label}>
                <a href="#place" className="flex items-center gap-1.5 px-1.5"><Icon name={icon} />{label}</a>
              </li>
            ))}
            <li className="mt-9">
              <a href="#network" className="flex items-center gap-1.5 px-1.5"><Icon name="network" />网络</a>
            </li>
          </ul>
          <button className="flex h-[43px] items-center gap-2.5 border-t border-[#d7dee0] bg-[#f8f9fb] pt-1 pl-3 font-bold">
            <RightArrow color="#8f8f8f" />
            文件夹树
          </button>
        </nav>

        <div className="ml-1.5 flex min-w-0 flex-1 flex-col">
          <div className="flex-1 border border-[#a5a8aa] bg-[#f2fbff] ring-2 ring-white ring-inset">
            <button className="mt-0.5 ml-0.5 flex h-[29px] w-[178px] items-center gap-1.5 bg-[#d8e2e9] pl-2 text-[#666]">
              <Icon name="part" className="size-[22px]" />
              key_handle.prt
            </button>
          </div>
          <p className="border-b border-[#c3c6c8] pl-4 leading-[46px]">
            <b>文件名:</b> key_handle.prt&nbsp; <b>修改日期:</b> <span className="text-[19px]">02-May-25 09:16:33 PM</span>
          </p>
          <div className="flex h-13 items-center pl-2.5">
            <label htmlFor="fileName" className="w-[63px]">文件名:</label>
            <input id="fileName" defaultValue="key_handle.prt" className="h-9 w-[327px] border border-[#a8acae] bg-white px-[5px]" />
            <label htmlFor="fileType" className="ml-[17px] w-[41px] whitespace-nowrap">类型</label>
            <div className="relative flex">
              <select id="fileType" className="h-[34px] w-[220px] appearance-none overflow-hidden border border-[#a8acae] bg-[#f5f6f8] pr-6 pl-2.5">
                <option>Creo 文件 (.prt, .asm, .drw)</option>
              </select>
              <span className="pointer-events-none absolute inset-y-0 right-0 flex w-6 items-center justify-center border-l border-[#a8acae]"><Caret /></span>
            </div>
            <span className="ml-2 whitespace-nowrap text-[#aaa]">子类型</span>
          </div>
          <div className="mb-1.5 flex h-9 items-center pl-[507px]">
            <button className="h-9 w-[86px] border border-[#c3c6c8] bg-[#f8f9fb]">打开</button>
            <button aria-label="打开选项" className="flex h-9 w-7 items-center justify-center border border-l-0 border-[#c3c6c8] bg-[#f8f9fb]"><Caret /></button>
            <button disabled className="ml-[7px] h-9 w-36 border border-[#d0d3d5] bg-[#e8eaec] text-[#bbb]">打开子集...</button>
          </div>
        </div>
      </div>
    </div>
  )
}

function ImeBar() {
  return (
    <div className="absolute top-[1270px] left-[2182px] flex h-[45px] w-40 items-center rounded-lg bg-white pl-3 shadow-md">
      <svg viewBox="0 0 28 26" className="h-[26px] w-7" aria-hidden="true">
        <path
          d="M25 3C17 1 7 3 5 8c-1 5 16 3 17 8 0 5-10 6-17 6"
          fill="none"
          stroke="#f07c22"
          strokeWidth="6"
        />
      </svg>
      <div className="ml-3 h-7 w-px bg-[#ccc]" />
      <span className="ml-3.5 text-2xl leading-8 font-medium text-black">中</span>
    </div>
  )
}

/* step markers drawn over the whole window */
function Annotations() {
  return (
    <div className="pointer-events-none absolute inset-0 overflow-hidden text-[#ed1c24]">
      <div className="absolute top-[66px] left-[324px] h-[171px] w-[110px] rounded-sm border-[7px] border-[#ed1c24]" />
      <div className="absolute top-[431px] left-[1561px] h-[93px] w-[228px] rounded-sm border-[7px] border-[#ed1c24]" />
      <div className="absolute top-[1226px] left-[2031px] h-[83px] w-[157px] rounded-sm border-[7px] border-[#ed1c24]" />
      <span className="absolute top-[219px] left-[380px] text-8xl">1</span>
      <p className="absolute top-[513px] left-[1679px] text-[90px] leading-24 whitespace-nowrap">
        <span className="text-8xl">2</span>第二个零件
      </p>
      <span className="absolute top-[1124px] left-[2070px] text-8xl">3</span>
    </div>
  )
}

export default function App() {
  return (
    <div className="relative flex h-screen w-full flex-col overflow-hidden bg-[#e8e9ed] font-['Noto_Sans','Noto_Sans_CJK_SC',sans-serif] text-lg text-[#444]">
      <SharedDefs />
      <TitleBar />
      <TabBar />
      <Ribbon />
      <div className="flex min-h-0 flex-1">
        <ModelTree />
        <main className="relative min-w-0 flex-1 overflow-hidden">
          <KeyModel />
          <ViewToolbar />
          <OpenDialog />
        </main>
      </div>
      <Annotations />
      <ImeBar />
    </div>
  )
}
